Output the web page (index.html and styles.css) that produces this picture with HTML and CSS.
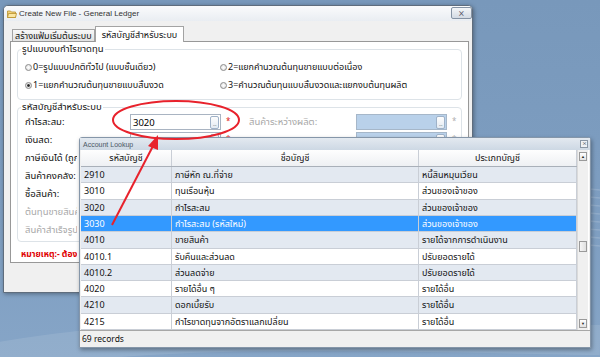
FILE: index.html
```html
<!DOCTYPE html>
<html lang="th">
<head>
  <meta charset="UTF-8">
  <meta name="viewport" content="width=device-width, initial-scale=1.0">
  <title>Create New File - General Ledger</title>
  <link rel="stylesheet" href="styles.css">
</head>
<body>
  <div class="desktop">
    <svg class="waves" width="600" height="357" viewBox="0 0 600 357">
      <path d="M470 215 C520 190 560 185 600 190" />
      <path d="M470 222 C520 198 560 193 600 198" />
      <path d="M470 229 C520 206 560 201 600 206" />
      <path d="M470 236 C520 214 560 209 600 214" />
      <path d="M470 243 C520 222 560 217 600 222" />
      <path d="M470 250 C520 230 560 226 600 230" />
      <path d="M470 257 C520 238 560 234 600 238" />
      <path d="M470 264 C520 246 560 242 600 246" />
      <path d="M0 357 C150 330 300 335 600 340" class="wide" />
    </svg>

    <div class="window main-window">
      <div class="titlebar">
        <svg class="folder" width="10" height="8" viewBox="0 0 10 8">
          <path d="M0.5 1 H3.5 L4.5 2 H8.5 V7.5 H0.5 Z" fill="#f3d27a" stroke="#b8902c" stroke-width="0.8"/>
          <path d="M1.5 3.5 H9.5 L8.5 7.5 H0.5 Z" fill="#fbe6a2" stroke="#b8902c" stroke-width="0.8"/>
        </svg>
        <span class="title">Create New File - General Ledger</span>
        <span class="close-btn">&#x2A2F;</span>
      </div>

      <div class="tabs">
        <div class="tab">สร้างแฟ้มเริ่มต้นระบบ</div>
        <div class="tab active">รหัสบัญชีสำหรับระบบ</div>
      </div>

      <div class="panel">
        <fieldset class="group">
          <legend>รูปแบบงบกำไรขาดทุน</legend>
          <div class="radios">
            <label class="radio"><span class="dot"></span>0=รูปแบบปกติทั่วไป (แบบชั้นเดียว)</label>
            <label class="radio"><span class="dot"></span>2=แยกคำนวณต้นทุนขายแบบต่อเนื่อง</label>
            <label class="radio"><span class="dot checked"></span>1=แยกคำนวณต้นทุนขายแบบสิ้นงวด</label>
            <label class="radio"><span class="dot"></span>3=คำนวณต้นทุนแบบสิ้นงวดและแยกงบต้นทุนผลิต</label>
          </div>
        </fieldset>

        <fieldset class="group accounts">
          <legend>รหัสบัญชีสำหรับระบบ</legend>
          <div class="form">
            <span class="lbl">กำไรสะสม:</span>
            <span class="field"><span class="val">3020</span><span class="dots">...</span></span>
            <span class="req">*</span>
            <span class="lbl off">สินค้าระหว่างผลิต:</span>
            <span class="field disabled"><span class="val"></span><span class="dots">...</span></span>
            <span class="req off">*</span>

            <span class="lbl">เงินสด:</span>
            <span class="field"><span class="val"></span><span class="dots">...</span></span>
            <span class="req">*</span>
            <span class="lbl off"></span>
            <span class="field disabled"><span class="val"></span><span class="dots">...</span></span>
            <span class="req off">*</span>

            <span class="lbl cut">ภาษีเงินได้ (ถูกหัก ณ ที่จ่าย):</span>
            <span class="field"></span>
            <span></span>
            <span></span><span></span><span></span>

            <span class="lbl">สินค้าคงคลัง:</span>
            <span class="field"></span>
            <span></span>
            <span></span><span></span><span></span>

            <span class="lbl">ซื้อสินค้า:</span>
            <span class="field"></span>
            <span></span>
            <span></span><span></span><span></span>

            <span class="lbl off cut">ต้นทุนขายสินค้า:</span>
            <span class="field disabled"></span>
            <span></span>
            <span></span><span></span><span></span>

            <span class="lbl off cut">สินค้าสำเร็จรูป:</span>
            <span class="field disabled"></span>
            <span></span>
            <span></span><span></span><span></span>
          </div>
        </fieldset>

        <p class="note">หมายเหตุ:- ต้องกำหนด</p>
      </div>
    </div>

    <div class="window lookup">
      <div class="lookup-title">
        <span>Account Lookup</span>
        <span class="mini-close">&#x2A2F;</span>
      </div>
      <div class="lookup-body">
        <div class="grid">
          <div class="row head">
            <div>รหัสบัญชี</div><div>ชื่อบัญชี</div><div>ประเภทบัญชี</div>
          </div>
          <div class="row alt"><div>2910</div><div>ภาษีหัก ณ.ที่จ่าย</div><div>หนี้สินหมุนเวียน</div></div>
          <div class="row"><div>3010</div><div>ทุนเรือนหุ้น</div><div>ส่วนของเจ้าของ</div></div>
          <div class="row alt"><div>3020</div><div>กำไรสะสม</div><div>ส่วนของเจ้าของ</div></div>
          <div class="row selected"><div>3030</div><div>กำไรสะสม (รหัสใหม่)</div><div>ส่วนของเจ้าของ</div></div>
          <div class="row alt"><div>4010</div><div>ขายสินค้า</div><div>รายได้จากการดำเนินงาน</div></div>
          <div class="row"><div>4010.1</div><div>รับคืนและส่วนลด</div><div>ปรับยอดรายได้</div></div>
          <div class="row alt"><div>4010.2</div><div>ส่วนลดจ่าย</div><div>ปรับยอดรายได้</div></div>
          <div class="row"><div>4020</div><div>รายได้อื่น ๆ</div><div>รายได้อื่น</div></div>
          <div class="row alt"><div>4210</div><div>ดอกเบี้ยรับ</div><div>รายได้อื่น</div></div>
          <div class="row"><div>4215</div><div>กำไรขาดทุนจากอัตราแลกเปลี่ยน</div><div>รายได้อื่น</div></div>
        </div>
        <div class="scrollbar">
          <span class="arrow">&#9650;</span>
          <span class="track"><span class="thumb"></span></span>
          <span class="arrow">&#9660;</span>
        </div>
      </div>
      <div class="lookup-foot">69 records</div>
    </div>

    <svg class="marks" width="600" height="357" viewBox="0 0 600 357">
      <ellipse cx="176" cy="120" rx="63" ry="19" fill="none" stroke="#e8222c" stroke-width="2"/>
      <line x1="112" y1="225" x2="153" y2="146" stroke="#e8222c" stroke-width="2"/>
      <polygon points="158,135 148,146 158,150" fill="#e8222c"/>
    </svg>
  </div>
</body>
</html>
```

FILE: styles.css
```css
body {
  margin: 0;
}

.desktop {
  position: relative;
  width: 600px;
  height: 357px;
  overflow: hidden;
  background: linear-gradient(#7898bb, #7e9ec1 60%, #86a5c7);
  font-family: "Noto Sans", "Noto Sans Thai", sans-serif;
  color: #111;
}

.waves {
  position: absolute;
  left: 0;
  top: 0;
}
.waves path {
  fill: none;
  stroke: rgba(255, 255, 255, .14);
  stroke-width: 1.5;
}
.waves .wide {
  stroke: rgba(255, 255, 255, .1);
  stroke-width: 30;
}

/* ============ main window ============ */
.window {
  position: absolute;
  box-sizing: border-box;
  background: #f0f0f0;
}

.main-window {
  left: 3px;
  top: 5px;
  width: 470px;
  height: 288px;
  border: 1px solid #5f6d7d;
  border-radius: 5px 5px 0 0;
  box-shadow: 1px 1px 4px rgba(0, 0, 0, .35);
}

.titlebar {
  display: flex;
  align-items: center;
  height: 15px;
  padding: 0 0 0 3px;
  background: linear-gradient(#fafbfc, #e9edf2);
  border-radius: 4px 4px 0 0;
}
.folder {
  margin-right: 2px;
}
.title {
  flex: 1;
  font-family: "Liberation Sans", sans-serif;
  font-size: 8px;
  color: #333;
}
.close-btn {
  width: 19px;
  height: 10px;
  align-self: flex-start;
  margin-top: 1px;
  border: 1px solid #8593a4;
  border-radius: 2px;
  background: linear-gradient(#f4f6f8, #d3dae3);
  font-size: 8px;
  line-height: 10px;
  text-align: center;
  color: #556;
}

.tabs {
  display: flex;
  align-items: flex-end;
  height: 20px;
  padding-left: 8px;
}
.tab {
  height: 11px;
  padding: 0 2px;
  border: 1px solid #a3a3a3;
  border-bottom: none;
  background: linear-gradient(#f8f8f8, #e2e2e2);
  font-size: 9px;
  line-height: 11px;
}
.tab.active {
  height: 15px;
  margin-bottom: -1px;
  padding: 0 6px;
  background: #fff;
  line-height: 15px;
  position: relative;
}

.panel {
  box-sizing: border-box;
  width: 459px;
  height: 222px;
  margin-left: 6px;
  padding-top: 1px;
  border: 1px solid #989898;
  background: #fff;
}

.group {
  margin: 0 6px 0 6px;
  padding: 0 0 0 7px;
  border: 1px solid #dde3e8;
  border-radius: 4px;
}
.group legend {
  margin-left: -4px;
  padding: 0 1px;
  font-size: 9.5px;
  line-height: 12px;
}

.radios {
  display: grid;
  grid-template-columns: 195px 1fr;
  grid-auto-rows: 18px;
  padding: 3px 0 5px;
}
.radio {
  display: flex;
  align-items: center;
  font-size: 9px;
}
.dot {
  box-sizing: border-box;
  width: 7px;
  height: 7px;
  margin-right: 1px;
  border: 1px solid #8b8b8b;
  border-radius: 50%;
  background: radial-gradient(#fff, #dcdcdc);
}
.dot.checked {
  background: radial-gradient(#222 0, #4a4a4a 35%, #e6e6e6 45%);
}

.accounts {
  margin-top: 1px;
}
.form {
  display: grid;
  grid-template-columns: 105px 91px 28px 107px 91px 1fr;
  grid-auto-rows: 18px;
  align-items: center;
  padding-bottom: 2px;
}
.lbl {
  font-size: 9.5px;
  white-space: nowrap;
  overflow: hidden;
}
.lbl.cut {
  width: 52px;
}
.lbl.off {
  color: #a8a8a8;
}
.field {
  box-sizing: border-box;
  display: flex;
  align-items: center;
  height: 16px;
  padding: 0 1px 0 2px;
  border: 1px solid #a9b4c2;
  background: #fff;
}
.field.disabled {
  background: #b9d1ea;
  border-color: #a6b7c9;
}
.val {
  flex: 1;
  font-size: 9.5px;
  color: #000;
}
.dots {
  box-sizing: border-box;
  width: 9px;
  height: 13px;
  border: 1px solid #9fb2c8;
  border-radius: 2px;
  background: linear-gradient(#fdfdfd, #e4ebf3);
  font-family: "Liberation Sans", sans-serif;
  font-size: 6px;
  line-height: 14px;
  letter-spacing: -0.5px;
  text-align: center;
  color: #4a5868;
}
.req {
  padding-left: 5px;
  color: #e01818;
  font-size: 8px;
  align-self: start;
  margin-top: 2px;
}
.req.off {
  color: #b0b0b0;
}

.note {
  width: 56px;
  margin: 6px 0 0 10px;
  overflow: hidden;
  white-space: nowrap;
  font-size: 8.5px;
  font-weight: bold;
  color: #e00000;
}

/* ============ lookup window ============ */
.lookup {
  left: 79px;
  top: 137px;
  width: 512px;
  height: 211px;
  border: 1px solid #8596a9;
  border-radius: 3px 3px 0 0;
  box-shadow: 1px 2px 4px rgba(0, 0, 0, .35);
  display: flex;
  flex-direction: column;
}
.lookup-title {
  display: flex;
  align-items: center;
  height: 13px;
  padding: 0 2px 0 3px;
  background: linear-gradient(#e3e9f0, #cdd8e4);
  font-family: "Liberation Sans", sans-serif;
  font-size: 7px;
  color: #4b5866;
}
.lookup-title span:first-child {
  flex: 1;
}
.mini-close {
  box-sizing: border-box;
  width: 8px;
  height: 8px;
  border: 1px solid #8a97a6;
  font-size: 6px;
  line-height: 6px;
  text-align: center;
  background: #eef1f5;
}

.lookup-body {
  display: flex;
  flex: 1;
  margin: 0 1px 0 1px;
  background: #fff;
}
.grid {
  width: 496px;
}
.row {
  display: grid;
  grid-template-columns: 91px 247px 1fr;
  height: 16.3px;
  box-sizing: border-box;
  border-bottom: 1px solid #c9ced6;
  font-size: 9px;
  line-height: 15.3px;
}
.row div {
  padding-left: 3px;
  border-right: 1px solid #c9ced6;
  white-space: nowrap;
  overflow: hidden;
}
.row.head {
  height: 17px;
  line-height: 16px;
  background: linear-gradient(#fefefe, #eef0f3);
  border-bottom-color: #a9b0b9;
}
.row.head div {
  padding: 0;
  text-align: center;
}
.row.alt {
  background: #e3e9f1;
}
.row.selected {
  background: #3399ff;
  color: #fff;
}

.scrollbar {
  display: flex;
  flex-direction: column;
  width: 11px;
  background: #f0f0f0;
  border-left: 1px solid #dadada;
  box-sizing: border-box;
}
.arrow {
  box-sizing: border-box;
  height: 9px;
  margin: 2px 1px 0;
  border: 1px solid #9a9a9a;
  background: linear-gradient(#fff, #e2e2e2);
  font-size: 4px;
  line-height: 7px;
  text-align: center;
  color: #222;
}
.arrow:last-child {
  margin: 0 1px 2px;
}
.track {
  flex: 1;
  position: relative;
}
.thumb {
  position: absolute;
  left: 1px;
  right: 1px;
  top: 80px;
  height: 11px;
  box-sizing: border-box;
  border: 1px solid #9a9a9a;
  background: linear-gradient(90deg, #f6f6f6, #e0e0e0);
}

.lookup-foot {
  height: 16px;
  padding-left: 2px;
  border-top: 1px solid #a7a7a7;
  background: #f0f0f0;
  font-family: "Noto Sans", sans-serif;
  font-size: 8.5px;
  line-height: 16px;
}

.marks {
  position: absolute;
  left: 0;
  top: 0;
}
```
